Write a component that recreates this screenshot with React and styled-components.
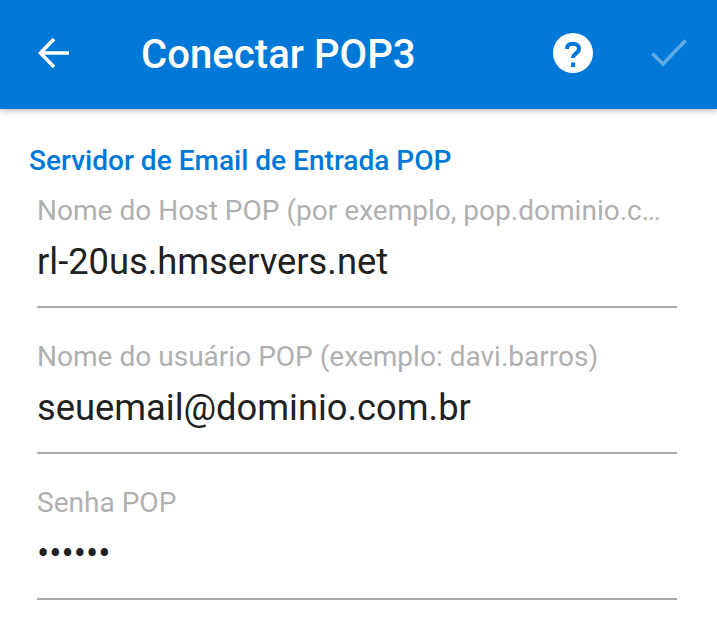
import React from "react";
import styled, { createGlobalStyle } from "styled-components";

const GlobalStyle = createGlobalStyle`
  html, body { margin: 0; padding: 0; background: #fff; }
  body { font-family: Roboto, "Liberation Sans", sans-serif; }
`;

const Page = styled.div`
  width: 717px;
  height: 643px;
  overflow: hidden;
  background: #fff;
`;

const Toolbar = styled.header`
  height: 109px;
  box-sizing: border-box;
  padding: 0 30px 3px 37px;
  background: #0078d7;
  display: flex;
  align-items: center;
  box-shadow: 0 2px 6px rgba(0, 0, 0, 0.25);
`;

const Title = styled.h1`
  flex: 1;
  margin: 2px 0 0 71px;
  color: #fff;
  font-size: 40.15px;
  font-weight: 500;
`;

const ConfirmIcon = styled.svg`
  margin-left: 58px;
`;

const Form = styled.main`
  padding: 37px 40px 0 37px;
`;

const Section = styled.h2`
  margin: 0 0 0 -8px;
  color: #0078d7;
  font-size: 28.05px;
  font-weight: 500;
  line-height: 30px;
`;

const Field = styled.div`
  height: 146px;
`;

const Label = styled.div`
  color: #b0b0b0;
  font-size: 28.05px;
  line-height: 30px;
  padding: 20px 10px 0 0;
  white-space: nowrap;
  overflow: hidden;
  text-overflow: ellipsis;
`;

const Value = styled.div`
  color: #212121;
  font-size: 36.3px;
  line-height: 40px;
  padding-top: 16px;
  height: 64px;
  border-bottom: 2px solid #a8a8a8;
`;

const fields = [
  { label: "Nome do Host POP (por exemplo, pop.dominio.com)", value: "rl-20us.hmservers.net" },
  { label: "Nome do usuário POP (exemplo: davi.barros)", value: "seuemail@dominio.com.br" },
  { label: "Senha POP", value: "••••••" },
];

export default function App() {
  return (
    <Page>
      <GlobalStyle />
      <Toolbar>
        <svg width="33" height="32" viewBox="0 0 33 32" fill="none" stroke="#fff" strokeWidth="3.6">
          <path d="M32 16H3.5M17 2L3.5 16 17 30" />
        </svg>
        <Title>Conectar POP3</Title>
        <svg width="40" height="40" viewBox="0 0 40 40">
          <circle cx="20" cy="20" r="20" fill="#fff" />
          <path fill="none" stroke="#0078d7" strokeWidth="4" d="M14 16c0-3.6 2.6-5.2 6-5.2s6 1.9 6 5c0 4.6-6 4.4-6 9.2" />
          <rect x="18" y="29.5" width="4.2" height="4.5" fill="#0078d7" />
        </svg>
        <ConfirmIcon width="36" height="28" viewBox="0 0 36 28" fill="none" stroke="#5fabe8" strokeWidth="3.6">
          <path d="M1.5 14.5L12 25 34.5 1.5" />
        </ConfirmIcon>
      </Toolbar>
      <Form>
        <Section>Servidor de Email de Entrada POP</Section>
        {fields.map((f) => (
          <Field key={f.label}>
            <Label>{f.label}</Label>
            <Value>{f.value}</Value>
          </Field>
        ))}
      </Form>
    </Page>
  );
}
